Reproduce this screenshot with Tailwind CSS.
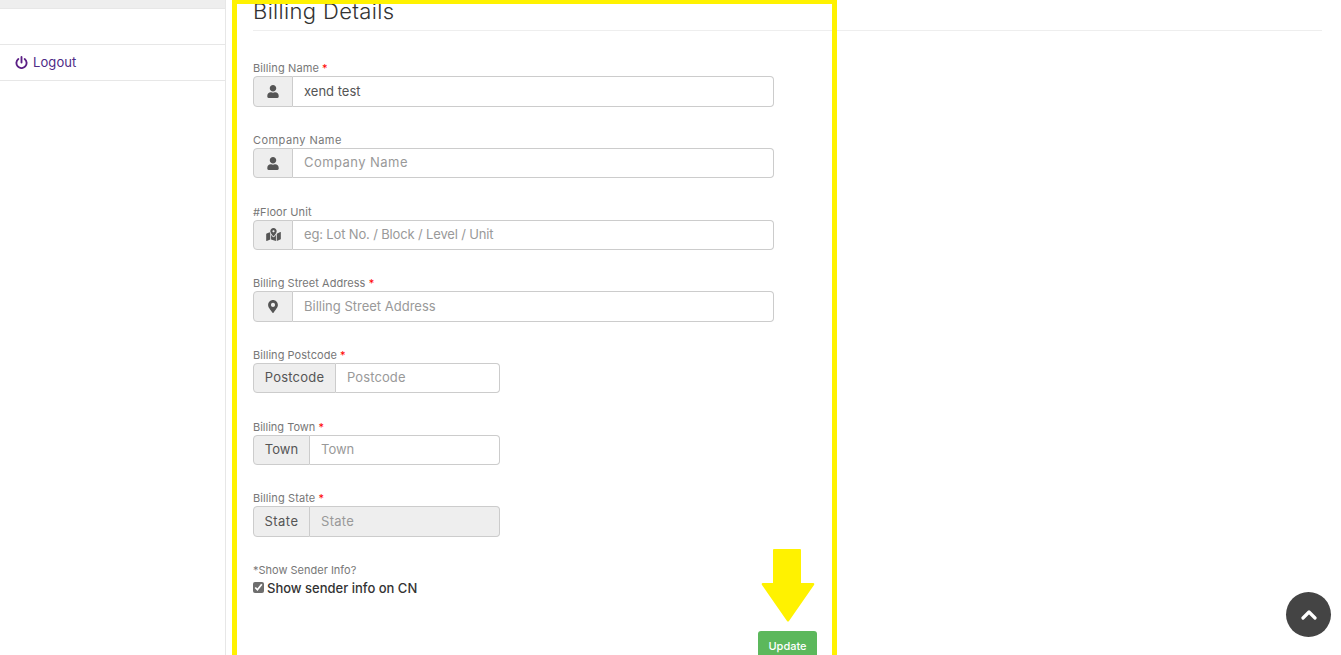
<!DOCTYPE html>
<html>
<head>
<meta charset="utf-8">
<script src="https://cdn.jsdelivr.net/npm/@tailwindcss/browser@4"></script>
</head>
<body class="bg-white font-['Inter','Liberation_Sans',sans-serif] overflow-hidden">
<div class="relative flex h-[655px] w-[1341px] overflow-hidden">
  <aside class="w-[226px] shrink-0 border-r border-[#e7e7e7]">
    <div class="h-[9px] bg-[#eeeeee] border-b border-[#e7e7e7]"></div>
    <div class="h-[36px] border-b border-[#e7e7e7]"></div>
    <div class="flex h-[36px] items-center gap-[5px] border-b border-[#e7e7e7] pl-[15px] text-[13px] tracking-[0.1px] text-[#4d2a86]">
      <svg class="h-[13px] w-[13px]" viewBox="0 0 14 14" fill="none" stroke="#5b1f85" stroke-width="2" stroke-linecap="round"><path d="M7 1v6"/><path d="M3.6 3.2a5.5 5.5 0 1 0 6.8 0"/></svg>
      <span>Logout</span>
    </div>
  </aside>
  <main class="flex-1 pl-[27px] pr-[19px]">
    <h2 class="h-[31px] border-b border-[#eeeeee] text-[22px] font-light leading-[22px] tracking-[0.35px] text-[#333333]">Billing Details</h2>
    <form class="pt-[29.4px]">
      <div class="h-[71.67px]">
        <label class="block h-[16px] text-[11px] leading-[16.6px] tracking-[0.1px] text-[#777777]">Billing Name <span class="text-[#ff0000]">*</span></label>
        <div class="flex h-[30.4px] w-[521px] text-[13px]">
          <span class="flex w-[40px] items-center justify-center rounded-l-[4px] border border-[#cccccc] bg-[#eeeeee]"><svg class="h-[13px] w-[12px]" viewBox="0 0 448 512" fill="#555555"><path d="M224 256c70.7 0 128-57.3 128-128S294.7 0 224 0 96 57.3 96 128s57.3 128 128 128zm89.6 32h-16.7c-22.2 10.2-46.9 16-72.9 16s-50.6-5.8-72.9-16h-16.7C60.2 288 0 348.2 0 422.4V464c0 26.5 21.5 48 48 48h352c26.5 0 48-21.5 48-48v-41.6c0-74.2-60.2-134.4-134.4-134.4z"/></svg></span>
          <input class="min-w-0 flex-1 rounded-r-[4px] border border-l-0 border-[#cccccc] px-[11px] tracking-[0px] text-[#555555] placeholder:text-[#999999]" value="xend test">
        </div>
      </div>
      <div class="h-[71.67px]">
        <label class="block h-[16px] text-[11px] leading-[16.6px] tracking-[0.45px] text-[#777777]">Company Name</label>
        <div class="flex h-[30.4px] w-[521px] text-[13px]">
          <span class="flex w-[40px] items-center justify-center rounded-l-[4px] border border-[#cccccc] bg-[#eeeeee]"><svg class="h-[13px] w-[12px]" viewBox="0 0 448 512" fill="#555555"><path d="M224 256c70.7 0 128-57.3 128-128S294.7 0 224 0 96 57.3 96 128s57.3 128 128 128zm89.6 32h-16.7c-22.2 10.2-46.9 16-72.9 16s-50.6-5.8-72.9-16h-16.7C60.2 288 0 348.2 0 422.4V464c0 26.5 21.5 48 48 48h352c26.5 0 48-21.5 48-48v-41.6c0-74.2-60.2-134.4-134.4-134.4z"/></svg></span>
          <input class="min-w-0 flex-1 rounded-r-[4px] border border-l-0 border-[#cccccc] px-[11px] tracking-[0.45px] text-[#555555] placeholder:text-[#999999]" placeholder="Company Name">
        </div>
      </div>
      <div class="h-[71.67px]">
        <label class="block h-[16px] text-[11px] leading-[16.6px] tracking-[0.1px] text-[#777777]">#Floor Unit</label>
        <div class="flex h-[30.4px] w-[521px] text-[13px]">
          <span class="flex w-[40px] items-center justify-center rounded-l-[4px] border border-[#cccccc] bg-[#eeeeee]"><svg class="h-[13px] w-[15px]" viewBox="0 0 576 512" fill="#555555"><path d="M288 0c-69.59 0-126 56.41-126 126 0 56.26 82.35 158.8 113.9 196.02 6.39 7.54 17.82 7.54 24.2 0C331.65 284.8 414 182.26 414 126 414 56.41 357.59 0 288 0zm0 168c-23.2 0-42-18.8-42-42s18.8-42 42-42 42 18.8 42 42-18.8 42-42 42zM20.12 215.95A32.006 32.006 0 0 0 0 245.66v250.32c0 11.32 11.43 19.06 21.94 14.86L160 448V214.92c-8.84-15.98-16.07-31.54-21.25-46.42L20.12 215.95zM288 359.67c-14.07 0-27.38-6.18-36.51-16.96-19.66-23.2-40.57-49.62-59.49-76.72V448l192 64V266c-18.92 27.09-39.82 53.52-59.49 76.72-9.13 10.77-22.44 16.95-36.51 16.95zm266.06-198.51L416 224v288l139.88-55.95A31.996 31.996 0 0 0 576 426.34V176.02c0-11.32-11.43-19.06-21.94-14.86z"/></svg></span>
          <input class="min-w-0 flex-1 rounded-r-[4px] border border-l-0 border-[#cccccc] px-[11px] tracking-[-0.15px] text-[#555555] placeholder:text-[#999999]" placeholder="eg: Lot No. / Block / Level / Unit">
        </div>
      </div>
      <div class="h-[71.67px]">
        <label class="block h-[16px] text-[11px] leading-[16.6px] tracking-[0.05px] text-[#777777]">Billing Street Address <span class="text-[#ff0000]">*</span></label>
        <div class="flex h-[30.4px] w-[521px] text-[13px]">
          <span class="flex w-[40px] items-center justify-center rounded-l-[4px] border border-[#cccccc] bg-[#eeeeee]"><svg class="h-[13px] w-[10px]" viewBox="0 0 384 512" fill="#555555"><path d="M172.268 501.67C26.97 291.031 0 268.413 0 192 0 85.961 85.961 0 192 0s192 85.961 192 192c0 76.413-26.97 99.031-172.268 309.67-9.535 13.774-29.93 13.773-39.464 0zM192 272c44.183 0 80-35.817 80-80s-35.817-80-80-80-80 35.817-80 80 35.817 80 80 80z"/></svg></span>
          <input class="min-w-0 flex-1 rounded-r-[4px] border border-l-0 border-[#cccccc] px-[11px] tracking-[0px] text-[#555555] placeholder:text-[#999999]" placeholder="Billing Street Address">
        </div>
      </div>
      <div class="h-[71.67px]">
        <label class="block h-[16px] text-[11px] leading-[16.6px] tracking-[0.05px] text-[#777777]">Billing Postcode <span class="text-[#ff0000]">*</span></label>
        <div class="flex h-[30.4px] w-[247px] text-[13px]">
          <span class="flex w-[83px] items-center justify-center rounded-l-[4px] border border-[#cccccc] bg-[#eeeeee] tracking-[0.2px] text-[#555555]">Postcode</span>
          <input class="min-w-0 flex-1 rounded-r-[4px] border border-l-0 border-[#cccccc] px-[11px] tracking-[0.1px] text-[#555555] placeholder:text-[#999999]" placeholder="Postcode">
        </div>
      </div>
      <div class="h-[71.67px]">
        <label class="block h-[16px] text-[11px] leading-[16.6px] tracking-[0px] text-[#777777]">Billing Town <span class="text-[#ff0000]">*</span></label>
        <div class="flex h-[30.4px] w-[247px] text-[13px]">
          <span class="flex w-[57px] items-center justify-center rounded-l-[4px] border border-[#cccccc] bg-[#eeeeee] tracking-[0.1px] text-[#555555]">Town</span>
          <input class="min-w-0 flex-1 rounded-r-[4px] border border-l-0 border-[#cccccc] px-[11px] tracking-[0px] text-[#555555] placeholder:text-[#999999]" placeholder="Town">
        </div>
      </div>
      <div class="h-[71.67px]">
        <label class="block h-[16px] text-[11px] leading-[16.6px] tracking-[0.1px] text-[#777777]">Billing State <span class="text-[#ff0000]">*</span></label>
        <div class="flex h-[30.4px] w-[247px] text-[13px]">
          <span class="flex w-[57px] items-center justify-center rounded-l-[4px] border border-[#cccccc] bg-[#eeeeee] tracking-[0.45px] text-[#555555]">State</span>
          <input disabled class="min-w-0 flex-1 rounded-r-[4px] border border-l-0 border-[#cccccc] bg-[#eeeeee] px-[11px] tracking-[0.3px] text-[#555555] placeholder:text-[#999999]" placeholder="State">
        </div>
      </div>
      <div class="h-[16px] text-[11px] leading-[16.6px] tracking-[0px] text-[#777777]">*Show Sender Info?</div>
      <label class="mt-[1px] flex h-[20px] items-center gap-[3px] text-[13px] font-medium tracking-[0px] text-[#333333]">
        <input type="checkbox" checked class="m-0 mb-[2px] h-[11px] w-[11px] accent-[#6e6e6e]">
        <span>Show sender info on CN</span>
      </label>
      <div class="mt-[32px] flex w-[564px] justify-end">
        <button type="button" class="h-[30px] w-[59px] rounded-[3px] bg-[#5cb85c] text-[11px] font-medium text-white">Update</button>
      </div>
    </form>
  </main>
  <div class="pointer-events-none absolute left-[232px] top-[-1px] h-[680px] w-[605px] border-[5px] border-[#fff200]"></div>
  <svg class="absolute left-[761px] top-[548px] h-[75px] w-[54px]" viewBox="0 0 54 75" fill="#fff200"><path d="M13 1h26a1 1 0 0 1 1 1v33h12q2 0 1 2L28 73q-1 1-2 0L1 37q-1-2 1-2h10V2a1 1 0 0 1 1-1z"/></svg>
  <button type="button" class="absolute left-[1286px] top-[592px] flex h-[45px] w-[45px] items-center justify-center rounded-full bg-[#444444]">
    <svg class="h-[12px] w-[16px]" viewBox="0 0 16 12" fill="none" stroke="#ffffff" stroke-width="3.2" stroke-linecap="round" stroke-linejoin="round"><path d="M2 9l6-6 6 6"/></svg>
  </button>
</div>
</body>
</html>
